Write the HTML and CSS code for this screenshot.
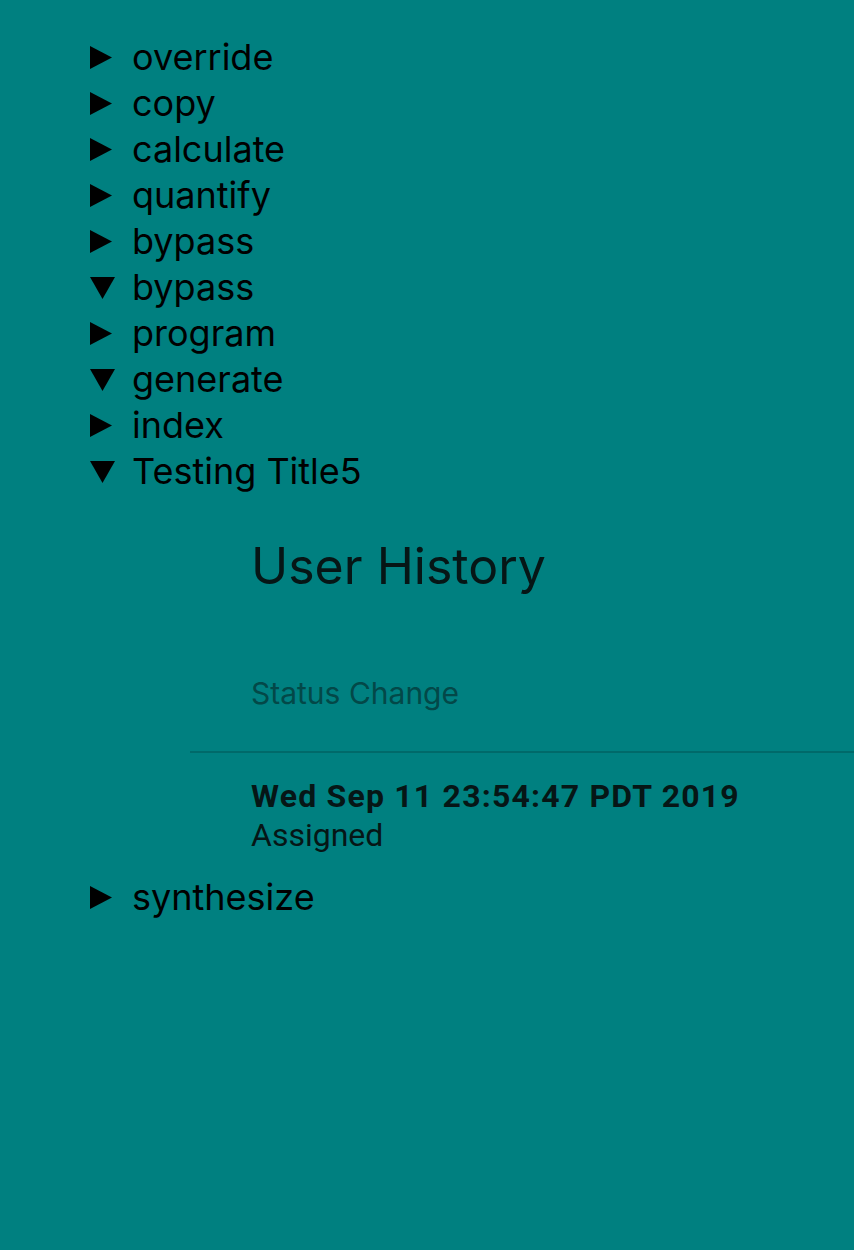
FILE: index.html
```html
<!DOCTYPE html>
<html>
<head>
<meta charset="utf-8">
<link rel="stylesheet" href="styles.css">
</head>
<body>
<ul class="tree">
  <li class="item"><div class="summary"><svg class="tri" viewBox="0 0 22 23"><polygon points="0,0 22,11.5 0,23"/></svg><span>override</span></div></li>
  <li class="item"><div class="summary"><svg class="tri" viewBox="0 0 22 23"><polygon points="0,0 22,11.5 0,23"/></svg><span>copy</span></div></li>
  <li class="item"><div class="summary"><svg class="tri" viewBox="0 0 22 23"><polygon points="0,0 22,11.5 0,23"/></svg><span>calculate</span></div></li>
  <li class="item"><div class="summary"><svg class="tri" viewBox="0 0 22 23"><polygon points="0,0 22,11.5 0,23"/></svg><span>quantify</span></div></li>
  <li class="item"><div class="summary"><svg class="tri" viewBox="0 0 22 23"><polygon points="0,0 22,11.5 0,23"/></svg><span>bypass</span></div></li>
  <li class="item"><div class="summary"><svg class="tri" viewBox="0 0 22 23"><polygon points="0,1 25,1 12.5,23"/></svg><span>bypass</span></div></li>
  <li class="item"><div class="summary"><svg class="tri" viewBox="0 0 22 23"><polygon points="0,0 22,11.5 0,23"/></svg><span>program</span></div></li>
  <li class="item"><div class="summary"><svg class="tri" viewBox="0 0 22 23"><polygon points="0,1 25,1 12.5,23"/></svg><span>generate</span></div></li>
  <li class="item"><div class="summary"><svg class="tri" viewBox="0 0 22 23"><polygon points="0,0 22,11.5 0,23"/></svg><span>index</span></div></li>
  <li class="item open">
    <div class="summary"><svg class="tri" viewBox="0 0 22 23"><polygon points="0,1 25,1 12.5,23"/></svg><span>Testing Title5</span></div>
    <div class="panel">
      <h2 class="title">User History</h2>
      <div class="col-head"><span>Status Change</span></div>
      <div class="row">
        <div class="date">Wed Sep 11 23:54:47 PDT 2019</div>
        <div class="status">Assigned</div>
      </div>
    </div>
  </li>
  <li class="item"><div class="summary"><svg class="tri" viewBox="0 0 22 23"><polygon points="0,0 22,11.5 0,23"/></svg><span>synthesize</span></div></li>
</ul>
</body>
</html>
```
FILE: styles.css
```css
html, body {
  margin: 0;
  padding: 0;
  background: #008080;
  height: 100%;
}
body {
  font-family: Inter, "Noto Sans", sans-serif;
  color: #000;
}
.tree {
  list-style: none;
  margin: 0;
  padding: 34px 0 0 90px;
}
.summary {
  display: flex;
  align-items: center;
  height: 46px;
  font-size: 36px;
}
.tri {
  width: 22px;
  height: 23px;
  flex: none;
  margin-right: 20px;
  fill: #000;
  overflow: visible;
}
.panel {
  margin-left: 100px;
  padding-top: 47px;
}
.title {
  margin: 0;
  padding-left: 61px;
  font-weight: 400;
  font-size: 50px;
  line-height: 50px;
  color: #061616;
}
.col-head {
  margin-top: 84px;
  padding: 0 0 40px 61px;
  font-size: 30px;
  line-height: 36px;
  color: #034848;
  border-bottom: 2px solid #006a6a;
}
.row {
  padding: 24px 0 19px 61px;
  font-family: Roboto, sans-serif;
  color: #061616;
}
.date {
  font-weight: 700;
  font-size: 32px;
  line-height: 38px;
  letter-spacing: 1.2px;
}
.status {
  font-size: 32px;
  line-height: 40px;
}
```
